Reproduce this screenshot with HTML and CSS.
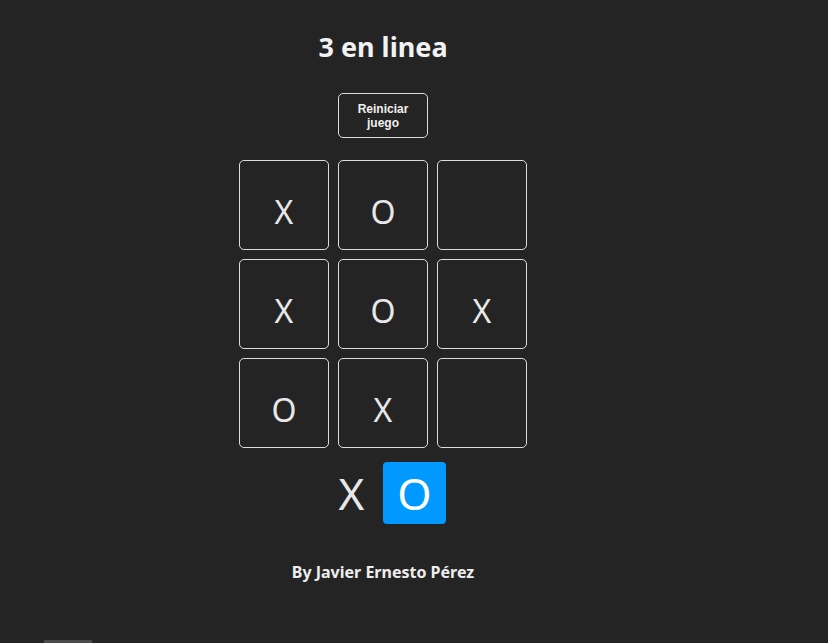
FILE: index.html
```html
<!DOCTYPE html>
<html lang="es">
<head>
<meta charset="utf-8">
<title>3 en linea</title>
<link rel="stylesheet" href="styles.css">
</head>
<body>
<main class="app">
  <h1 class="title">3 en linea</h1>
  <button class="reset">Reiniciar juego</button>
  <section class="board">
    <div class="square">X</div>
    <div class="square">O</div>
    <div class="square"></div>
    <div class="square">X</div>
    <div class="square">O</div>
    <div class="square">X</div>
    <div class="square">O</div>
    <div class="square">X</div>
    <div class="square"></div>
  </section>
  <section class="turn">
    <div class="turn-square">X</div>
    <div class="turn-square is-selected">O</div>
  </section>
  <footer class="credit">By Javier Ernesto Pérez</footer>
</main>
<div class="bottom-tab"></div>
</body>
</html>
```
FILE: styles.css
```css
html, body {
  margin: 0;
  padding: 0;
  background: #242424;
  height: 100%;
  overflow: hidden;
}
body {
  font-family: "Noto Sans", "Open Sans", sans-serif;
  color: #eeeeee;
  position: relative;
}
.app {
  width: 766px;
  display: flex;
  flex-direction: column;
  align-items: center;
  padding-top: 28px;
}
.title {
  margin: 0;
  font-size: 27px;
  line-height: 38px;
  font-weight: 700;
  color: #f2f2f2;
}
.reset {
  margin-top: 27px;
  width: 90px;
  height: 45px;
  background: transparent;
  border: 1px solid #dddddd;
  border-radius: 5px;
  color: #f0f0f0;
  font-family: "Liberation Sans", Arial, sans-serif;
  font-weight: 700;
  font-size: 12px;
  line-height: 14px;
  padding: 0 12px;
}
.board {
  margin-top: 22px;
  display: grid;
  grid-template-columns: repeat(3, 90px);
  gap: 9px;
}
.square {
  width: 90px;
  height: 90px;
  box-sizing: border-box;
  border: 1px solid #dcdcdc;
  border-radius: 5px;
  display: grid;
  place-items: center;
  font-size: 32px;
  padding-top: 13px;
  color: #e8e8e8;
}
.turn {
  margin-top: 14px;
  display: flex;
}
.turn-square {
  width: 63px;
  height: 62px;
  border-radius: 4px;
  display: grid;
  place-items: center;
  font-size: 44px;
  color: #e8e8e8;
}
.turn-square.is-selected {
  background: #0099ff;
  color: #ffffff;
}
.credit {
  margin-top: 37px;
  font-weight: 700;
  font-size: 16px;
  color: #eeeeee;
}
.bottom-tab {
  position: absolute;
  left: 44px;
  bottom: 0;
  width: 48px;
  height: 3px;
  background: #4a4a4a;
}
```
